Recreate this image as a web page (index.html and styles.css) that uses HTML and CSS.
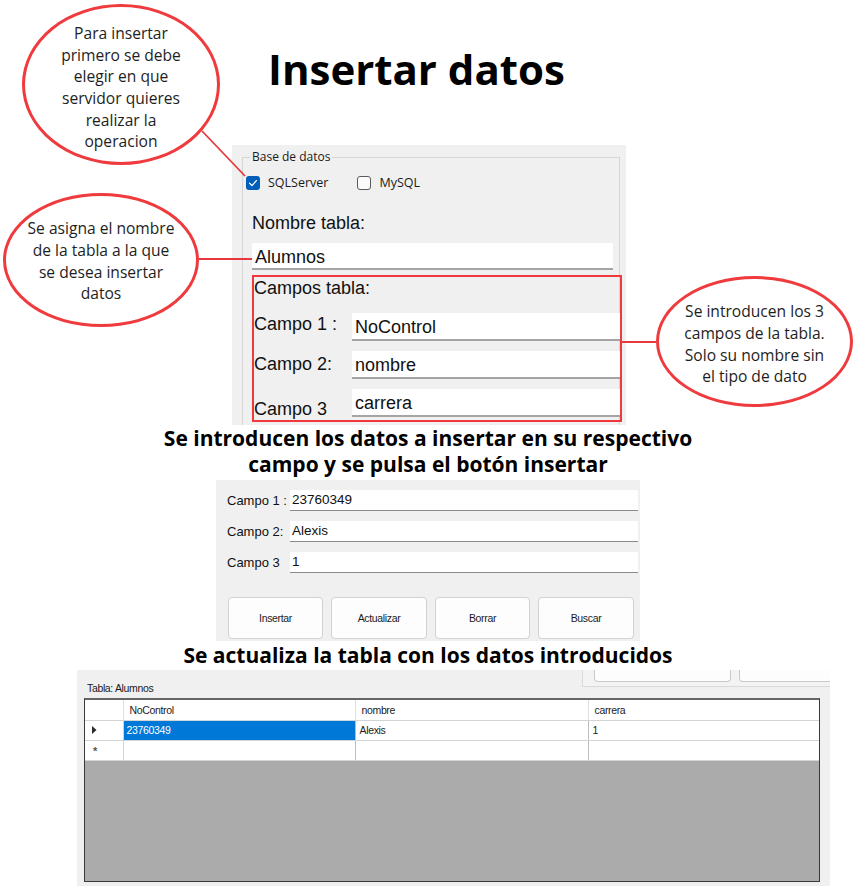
FILE: index.html
```html
<!DOCTYPE html>
<html lang="es">
<head>
<meta charset="utf-8">
<title>Insertar datos</title>
<link rel="stylesheet" href="styles.css">
</head>
<body>
<div class="page">
  <h1 class="title">Insertar datos</h1>

  <section class="panel form1">
    <fieldset class="group">
      <legend>Base de datos</legend>
      <div class="checks">
        <label class="chk"><span class="box checked"><svg viewBox="0 0 14 14" width="14" height="14"><polyline points="3.6,7.3 6,9.6 10.4,4.6" fill="none" stroke="#fff" stroke-width="1.3" stroke-linecap="round" stroke-linejoin="round"/></svg></span>SQLServer</label>
        <label class="chk mysql"><span class="box"></span>MySQL</label>
      </div>
      <div class="big-label name-label">Nombre tabla:</div>
      <div class="tb big name-box">Alumnos</div>
      <div class="campos">
        <div class="big-label">Campos tabla:</div>
        <div class="frows">
          <div class="frow"><span class="big-label fl fl1">Campo 1 :</span><div class="tb big">NoControl</div></div>
          <div class="frow"><span class="big-label fl fl2">Campo 2:</span><div class="tb big">nombre</div></div>
          <div class="frow"><span class="big-label fl fl3">Campo 3</span><div class="tb big">carrera</div></div>
        </div>
      </div>
    </fieldset>
  </section>

  <p class="caption c1">Se introducen los datos a insertar en su respectivo<br>campo y se pulsa el botón insertar</p>

  <section class="panel form2">
    <div class="srows">
      <div class="srow"><span class="sl">Campo 1 :</span><div class="tb small">23760349</div></div>
      <div class="srow"><span class="sl">Campo 2:</span><div class="tb small">Alexis</div></div>
      <div class="srow"><span class="sl">Campo 3</span><div class="tb small">1</div></div>
    </div>
    <div class="buttons">
      <button class="btn">Insertar</button>
      <button class="btn">Actualizar</button>
      <button class="btn">Borrar</button>
      <button class="btn">Buscar</button>
    </div>
  </section>

  <p class="caption c2">Se actualiza la tabla con los datos introducidos</p>

  <section class="panel grid-panel">
    <div class="gp-top">
      <span class="gp-label">Tabla: Alumnos</span>
      <div class="frag"><span class="fbtn"></span><span class="fbtn wide"></span></div>
    </div>
    <div class="grid">
      <table>
        <colgroup><col class="c-rh"><col class="c-1"><col class="c-2"><col class="c-3"></colgroup>
        <thead>
          <tr><th class="rh"></th><th>NoControl</th><th>nombre</th><th>carrera</th></tr>
        </thead>
        <tbody>
          <tr>
            <td class="rh"><svg viewBox="0 0 5 8" width="5" height="8"><polygon points="0,0 4.5,4 0,8" fill="#2a2a2a"/></svg></td>
            <td class="sel">23760349</td><td>Alexis</td><td>1</td>
          </tr>
          <tr>
            <td class="rh star">*</td>
            <td></td><td></td><td></td>
          </tr>
        </tbody>
      </table>
    </div>
  </section>

  <svg class="connectors" viewBox="0 0 858 888" width="858" height="888">
    <line x1="202" y1="131" x2="245" y2="176" />
    <line x1="199" y1="259" x2="252" y2="259" />
    <line x1="622" y1="342" x2="656" y2="342" />
  </svg>

  <div class="bubble b1"><p>Para insertar<br>primero se debe<br>elegir en que<br>servidor quieres<br>realizar la<br>operacion</p></div>
  <div class="bubble b2"><p>Se asigna el nombre<br>de la tabla a la que<br>se desea insertar<br>datos</p></div>
  <div class="bubble b3"><p>Se introducen los 3<br>campos de la tabla.<br>Solo su nombre sin<br>el tipo de dato</p></div>
</div>
</body>
</html>
```

FILE: styles.css
```css
* { box-sizing: border-box; }

body {
  margin: 0;
  background: #ffffff;
  font-family: "Open Sans", sans-serif;
  color: #000;
}

.page {
  position: relative;
  width: 858px;
  height: 888px;
  overflow: hidden;
}

/* ---------- title ---------- */
.title {
  margin: 0;
  height: 145px;
  padding: 44px 0 0 268px;
  font: 700 42px/50px "Open Sans", sans-serif;
  color: #000;
}

.panel {
  background: #f0f0f0;
}

/* ---------- panel 1 ---------- */
.form1 {
  margin-left: 232px;
  width: 394px;
  height: 280px;
  overflow: hidden;
}

.group {
  margin: 5px 0 0 10px;
  padding: 0;
  width: 378px;
  height: 320px;
  min-width: 0;
  border: 1px solid #d6d6d6;
}

.group legend {
  margin-left: 7px;
  padding: 0 2px;
  font: 12px/14px "Open Sans", sans-serif;
  color: #1a1a1a;
}

.checks {
  display: flex;
  align-items: center;
  height: 14px;
  margin-top: 12px;
  padding-left: 3px;
}

.chk {
  display: flex;
  align-items: center;
  font: 12.5px/14px "Open Sans", sans-serif;
  color: #1a1a1a;
}

.chk.mysql { margin-left: 29px; }

.box {
  display: block;
  width: 14px;
  height: 14px;
  margin-right: 8px;
  border-radius: 3px;
  border: 1px solid #5c5c5c;
  background: #fbfbfb;
}

.box.checked {
  border: none;
  background: #005fb8;
}

.box svg { display: block; }

.big-label {
  font: 18px/22px "Liberation Sans", Arial, sans-serif;
  color: #111;
}

.name-label {
  margin-top: 22px;
  padding-left: 9px;
}

.tb {
  background: #ffffff;
  white-space: nowrap;
  overflow: hidden;
}

.tb.big {
  border-bottom: 2px solid #a4a4a4;
  padding: 3px 0 0 3px;
  font: 18px/22px "Liberation Sans", Arial, sans-serif;
  color: #111;
}

.name-box {
  margin: 9px 0 0 9px;
  width: 361px;
  height: 27px;
}

.campos {
  margin: 5px 0 0 9px;
  width: 370px;
  height: 147px;
  border: 2px solid #f0393c;
  position: relative;
}

.frows {
  display: flex;
  flex-direction: column;
  gap: 10px;
  margin-top: 14px;
}

.frow {
  display: flex;
  align-items: flex-start;
  height: 28px;
}

.fl { width: 98px; flex: none; }
.fl1 { margin-top: 0; }
.fl2 { margin-top: 2px; }
.fl3 { margin-top: 9px; }

.frow .tb { flex: 1; height: 28px; }

/* ---------- captions ---------- */
.caption {
  margin: 0;
  text-align: center;
  font-family: "Open Sans", sans-serif;
  font-weight: 700;
  font-size: 21px;
  color: #000;
  padding-right: 2px;
}

.c1 {
  height: 55px;
  line-height: 26px;
  padding-top: 0;
}

.c2 {
  height: 29px;
  line-height: 29px;
}

/* ---------- panel 2 ---------- */
.form2 {
  margin-left: 216px;
  width: 424px;
  height: 161px;
  padding: 10px 0 0 11px;
}

.srows {
  display: flex;
  flex-direction: column;
  gap: 10px;
}

.srow {
  display: flex;
  align-items: center;
  height: 21px;
}

.sl {
  width: 63px;
  flex: none;
  font: 13px/20px "Liberation Sans", Arial, sans-serif;
  color: #111;
}

.tb.small {
  width: 348px;
  height: 21px;
  border-bottom: 1px solid #8a8a8a;
  padding-left: 2px;
  font: 13.5px/20px "Liberation Sans", Arial, sans-serif;
  color: #111;
}

.buttons {
  display: flex;
  gap: 8px;
  margin: 24px 0 0 1px;
}

.btn {
  width: 95px;
  height: 42px;
  padding: 0;
  background: #fdfdfd;
  border: 1px solid #d2d2d2;
  border-radius: 4px;
  font: 10.5px "Liberation Sans", Arial, sans-serif;
  letter-spacing: -0.35px;
  color: #1a1a1a;
}

.btn:nth-child(2), .btn:nth-child(4) { width: 96px; }

/* ---------- panel 3 ---------- */
.grid-panel {
  margin-left: 77px;
  width: 753px;
  height: 216px;
  overflow: hidden;
}

.gp-top {
  display: flex;
  height: 28px;
}

.gp-label {
  margin: 11px 0 0 10px;
  font: 10.5px/14px "Liberation Sans", Arial, sans-serif;
  letter-spacing: -0.35px;
  color: #1a1a1a;
}

.frag {
  margin-left: auto;
  width: 248px;
  height: 17px;
  display: flex;
  gap: 8px;
  padding-left: 11px;
  border-left: 1px solid #dadada;
  border-bottom: 1px solid #dadada;
  background: #f3f3f3;
  overflow: hidden;
}

.fbtn {
  flex: none;
  width: 137px;
  height: 12px;
  background: #fdfdfd;
  border: 1px solid #c9c9c9;
  border-top: none;
  border-radius: 0 0 4px 4px;
}

.fbtn.wide { width: 110px; }

.grid {
  margin-left: 7px;
  width: 736px;
  height: 184px;
  background: #ababab;
  border: 1px solid #3a3a3a;
  border-top: 2px solid #656565;
  overflow: hidden;
}

.grid table {
  border-collapse: collapse;
  table-layout: fixed;
  width: 734px;
}

.c-rh { width: 38px; }
.c-1 { width: 232px; }
.c-2 { width: 233px; }
.c-3 { width: 231px; }

.grid th, .grid td {
  height: 20px;
  padding: 0 0 0 4px;
  background: #ffffff;
  border-right: 1px solid #bdbdbd;
  border-bottom: 1px solid #d4d4d4;
  font: 10.5px/18px "Liberation Sans", Arial, sans-serif;
  letter-spacing: -0.35px;
  font-weight: 400;
  text-align: left;
  color: #1a1a1a;
  white-space: nowrap;
}

.grid th { padding-left: 6px; border-right-color: #e0e0e0; }
.grid th:first-child, .grid td:first-child { padding-left: 0; }
.grid th:last-child, .grid td:last-child { border-right: none; }

.grid td.rh {
  padding-left: 7px;
  border-right-color: #d4d4d4;
}

.grid td.rh svg { display: block; }

.grid td.star {
  padding-left: 8px;
  padding-top: 2px;
  font: 700 11px/16px "Liberation Sans", Arial, sans-serif;
  color: #555;
}

.grid td.sel {
  background: #0078d7;
  color: #ffffff;
  padding-left: 3px;
}

/* ---------- annotations ---------- */
.connectors {
  position: absolute;
  left: 0;
  top: 0;
  pointer-events: none;
}

.connectors line {
  stroke: #e8383d;
  stroke-width: 1.8;
}

.bubble {
  position: absolute;
  display: flex;
  align-items: center;
  justify-content: center;
  border: 3px solid #ef3a3e;
  border-radius: 50%;
  background: #ffffff;
  text-align: center;
  font: 15.6px/21.7px "Open Sans", sans-serif;
  color: #1e1e1e;
}

.bubble p { margin: 0; white-space: nowrap; }

.b1 { left: 22px; top: 4px; width: 198px; height: 161px; padding-top: 7px; }
.b2 { left: 3px; top: 193px; width: 196px; height: 134px; padding-top: 3px; }
.b3 { left: 656px; top: 276px; width: 197px; height: 131px; padding-top: 6px; }
```
